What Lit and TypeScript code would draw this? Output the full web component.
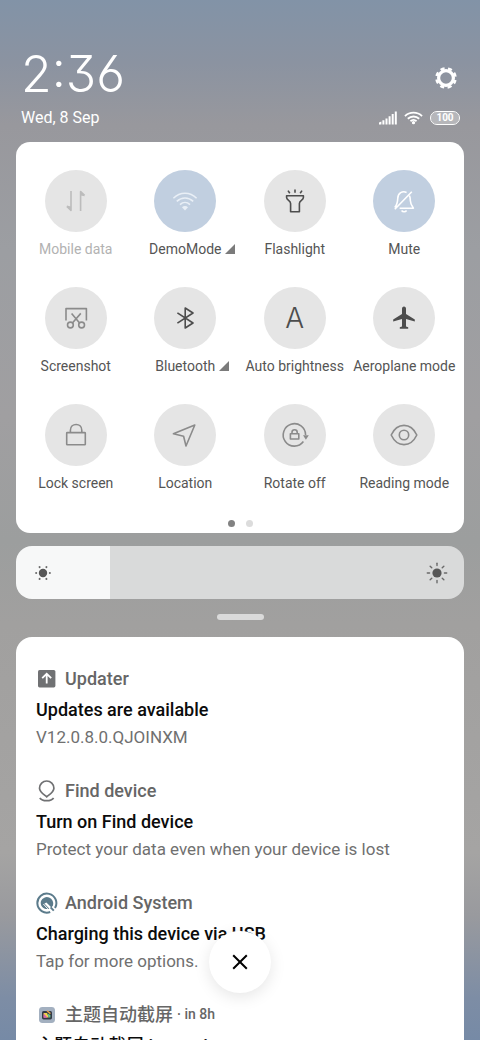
import { LitElement, html, css, svg, nothing } from "lit";
import { customElement, property, state } from "lit/decorators.js";
import { classMap } from "lit/directives/class-map.js";
import { styleMap } from "lit/directives/style-map.js";

const tileIcons: Record<string, unknown> = {
  data: svg`<path d="M9 4V23.4L4.8 19.4M18.6 24V4.6L22.6 8.4" /><path class="fill" d="M4.8 18.4L9 19.6V24ZM18.6 3.8L22.8 9.2L18.6 8.4Z" />`,
  wifi: svg`<path d="M2.4 11.2C9 4.6 19 4.6 25.6 11.2M5.8 14.4C10.6 9.8 17.4 9.8 22.2 14.4M9 17.6C12 14.8 16 14.8 19 17.6" /><path class="fill" d="M14 23.4L11 20.2C12.6 18.6 15.4 18.6 17 20.2Z" />`,
  flash: svg`<path d="M14 2.6V5.8M7 3.6L8.8 6.2M21 3.6L19.2 6.2M5.6 8.8H22.4V10.4C22.4 13.2 18.4 13.4 18.4 16.4V24.8H9.6V16.4C9.6 13.4 5.6 13.2 5.6 10.4Z" />`,
  mute: svg`<path d="M19.4 8.6C20.3 10 20.2 11.6 20.3 13.4C20.4 16.6 21.4 18.4 23.4 21.2H9.6M16.6 5.4C12.4 3.6 8 6 7.8 11C7.6 15.4 7.2 17.6 4.8 20.6M21.8 4.8L4.8 22.2M11.6 23.6C12.8 25.2 15.4 25.2 16.6 23.6" />`,
  shot: svg`<path d="M4 16.4V4.6H24.4V16.4M9.6 9.4L17.6 19M18.8 9.4L10.4 19" /><circle cx="8.4" cy="21" r="2.9" /><circle cx="19.6" cy="21" r="2.9" />`,
  bluetooth: svg`<path d="M6.4 8.8L22 19L14.2 24V4L22 9L6.4 19.2" />`,
  plane: svg`<path class="fill" d="M14 2.6C15.2 2.6 16 3.6 16 4.8V10L24.8 15.6V17.6L16 15V22.4L18.2 23.2V24.8H9.8V23.2L12 22.4V15L3.2 17.6V15.6L12 10V4.8C12 3.6 12.8 2.6 14 2.6Z" />`,
  lock: svg`<rect x="4.7" y="11.6" width="18.6" height="12.2" rx="0.6" /><path d="M8.4 11.4V9.2C8.4 1.6 19.8 1.6 19.8 9.2V11.4" />`,
  location: svg`<path d="M2.4 12.8L23.8 4L15 25L12.6 15.2Z" />`,
  rotate: svg`<path d="M22.4 20.6A11.2 11.2 0 1 1 24.6 14" /><path class="fill" d="M22 14.2H27.8L24.9 18.8Z" /><rect x="9.4" y="12.8" width="8.4" height="5.2" /><path d="M11 12.6V11.2C11 7.9 16.2 7.9 16.2 11.2V12.6" />`,
  eye: svg`<path d="M1.2 14C7.2 1.2 20.8 1.2 26.8 14C20.8 26.8 7.2 26.8 1.2 14Z" /><circle cx="14" cy="14" r="4.7" />`,
};

interface Tile {
  icon: string;
  label: string;
  tone?: "faint" | "strong" | "white" | "pale";
  on?: boolean;
  more?: boolean;
}

const tiles: Tile[] = [
  { icon: "data", label: "Mobile data", tone: "faint" },
  { icon: "wifi", label: "DemoMode", tone: "pale", on: true, more: true },
  { icon: "flash", label: "Flashlight", tone: "strong" },
  { icon: "mute", label: "Mute", tone: "white", on: true },
  { icon: "shot", label: "Screenshot" },
  { icon: "bluetooth", label: "Bluetooth", tone: "strong", more: true },
  { icon: "auto", label: "Auto brightness", tone: "strong" },
  { icon: "plane", label: "Aeroplane mode", tone: "strong" },
  { icon: "lock", label: "Lock screen" },
  { icon: "location", label: "Location" },
  { icon: "rotate", label: "Rotate off" },
  { icon: "eye", label: "Reading mode" },
];

@customElement("quick-tile")
class QuickTile extends LitElement {
  @property({ attribute: false }) tile!: Tile;

  static styles = css`
    :host { display: block; min-width: 0; }
    .tile {
      display: flex; flex-direction: column; align-items: center; gap: 8px;
      width: 100%; padding: 0; border: 0; background: none; cursor: pointer;
      font: 400 14px/18px Roboto, sans-serif; color: #555;
    }
    .disc {
      display: grid; place-items: center; width: 62px; height: 62px;
      border-radius: 50%; background: #e5e5e5; color: #8b8b8b;
    }
    .disc.on { background: #c1cfe0; }
    .disc.faint { color: #bcbcbc; }
    .disc.strong { color: #4d4d4d; }
    .disc.white { color: #fff; }
    .disc.pale { color: #e9eff6; }
    .icon { width: 28px; height: 28px; fill: none; stroke: currentColor; stroke-width: 1.6; stroke-linejoin: round; overflow: visible; }
    .fill { fill: currentColor; stroke: none; }
    .letter { font: 300 28px/28px Inter, sans-serif; }
    .label { white-space: nowrap; }
    .label.faint { color: #b2b2b2; }
    .more { width: 10px; height: 10px; margin: 0 -14px 0 4px; fill: #7b7b7b; }
  `;

  render() {
    const t = this.tile;
    const tone = t.tone ?? "";
    return html`<button class="tile" aria-pressed=${t.on ? "true" : "false"}>
      <span class=${classMap({ disc: true, on: !!t.on, [tone || "plain"]: true })}>
        ${t.icon === "auto"
          ? html`<span class="letter" aria-hidden="true">A</span>`
          : html`<svg class="icon" viewBox="0 0 28 28" aria-hidden="true">${tileIcons[t.icon]}</svg>`}
      </span>
      <span class=${classMap({ label: true, faint: tone === "faint" })}>${t.label}${t.more
        ? html`<svg class="more" viewBox="0 0 10 10" aria-hidden="true"><path d="M10 0V10H0Z" /></svg>`
        : nothing}</span>
    </button>`;
  }
}

const noteIcons: Record<string, unknown> = {
  updater: svg`<rect x="2" y="2" width="17.4" height="17.4" rx="1.6" fill="#707173" /><path d="M10.7 15.6V6.2M6.2 10.2L10.7 5.8L15.2 10.2" fill="none" stroke="#fff" stroke-width="1.8" />`,
  find: svg`<path d="M10.7 16.8C7.3 14 3.5 11.8 3.5 8.2A7.2 7.2 0 0 1 17.9 8.2C17.9 11.8 14.1 14 10.7 16.8Z" fill="none" stroke="#707173" stroke-width="1.7" /><path d="M3.8 18C6.2 21.6 15.2 21.6 17.6 18" fill="none" stroke="#707173" stroke-width="1.7" />`,
  android: svg`<path d="M14.2 20A9.5 9.5 0 1 1 19 16" fill="none" stroke="#5b7b8b" stroke-width="2" /><path d="M12 17A6.2 6.2 0 0 1 5 9A6.4 6.4 0 0 1 17 13.4L15.4 15.4L10.4 10.6L8.4 11.4L13.4 16.8Z" fill="#5b7b8b" /><path d="M7.4 12L11.8 16.8" stroke="#fff" stroke-width="1" /><path d="M14.6 15.4L17.8 18.6" stroke="#5b7b8b" stroke-width="2" />`,
  theme: svg`<rect x="3" y="3" width="16" height="16" rx="3.4" fill="#a3b0c0" /><rect x="6" y="7" width="10" height="8.4" rx="1.6" fill="#333a45" /><path d="M7.6 9H11L12.8 13.6H7.6Z" fill="#f3d34a" /><path d="M7.6 9.6L11.6 13.8H7.6Z" fill="#d65fb6" /><path d="M11.4 9.6L14.4 11V13.6H12.8Z" fill="#64c98c" /><path d="M11 6.8L14.4 9.6" stroke="#e9a04a" stroke-width="1.4" />`,
};

interface Note {
  icon: string;
  app: string;
  when?: string;
  title: string;
  body: string;
}

const notes: Note[] = [
  { icon: "updater", app: "Updater", title: "Updates are available", body: "V12.0.8.0.QJOINXM" },
  { icon: "find", app: "Find device", title: "Turn on Find device", body: "Protect your data even when your device is lost" },
  { icon: "android", app: "Android System", title: "Charging this device via USB", body: "Tap for more options." },
  { icon: "theme", app: "主题自动截屏", when: "in 8h", title: "主题自动截屏 is running", body: "" },
];

@customElement("app-root")
class AppRoot extends LitElement {
  @state() private level = 21;

  static styles = css`
    :host {
      display: block; position: relative; height: 100vh; overflow: hidden; box-sizing: border-box;
      font-family: Roboto, "Noto Sans CJK SC", sans-serif;
      background: linear-gradient(180deg, #8293a7 0%, #8b93a1 6%, #98989d 12%, #9c9ea2 24%, #a09fa1 40%, #9c9e9e 52%, #a1a09f 60%, #a5a4a3 82%, #999a9e 88%, #7d8da5 96%, #768aa6 100%);
    }
    .panel { padding: 46px 16px 0; }
    .head { display: flex; justify-content: space-between; padding: 0 4px 0 5px; color: #fff; height: 96px; box-sizing: border-box; }
    .left, .right { display: flex; flex-direction: column; }
    .right { align-items: flex-end; padding-top: 20px; gap: 20px; }
    .clock { font: 300 50px/56px Inter, sans-serif; font-feature-settings: "cv09", "cv03"; }
    .date { margin-top: 6px; font-size: 16px; line-height: 20px; }
    .gear { display: block; padding: 0; margin-right: 2px; border: 0; background: none; width: 24px; height: 24px; cursor: pointer; }
    .svg { display: block; }
    .status { display: flex; align-items: center; gap: 7px; height: 15px; }
    .battery {
      box-sizing: border-box; width: 30px; height: 14px; padding: 0; border: 1px solid #fff; border-radius: 7px;
      background: rgba(255, 255, 255, 0.3); background-clip: padding-box;
      font-size: 10px; line-height: 12px; font-weight: 700; text-align: center;
    }
    .card { background: #fff; border-radius: 14px; }
    .tiles { padding: 28px 5px 5px; }
    .grid { display: grid; grid-template-columns: repeat(4, minmax(0, 1fr)); row-gap: 29px; }
    .dots { display: flex; justify-content: center; gap: 11px; margin-top: 28px; height: 8px; }
    .dot { width: 7px; height: 7px; padding: 0; border: 0; border-radius: 50%; background: #dcdcdc; }
    .dot.now { background: #828282; }
    .bright { display: grid; margin-top: 13px; height: 53px; border-radius: 16px; overflow: hidden; }
    .range {
      grid-area: 1 / 1; appearance: none; -webkit-appearance: none; width: 100%; height: 53px; margin: 0; cursor: pointer;
      background: linear-gradient(90deg, #f7f8f8 var(--level), #d9dada var(--level));
    }
    .range::-webkit-slider-thumb { -webkit-appearance: none; width: 1px; height: 53px; background: transparent; }
    .suns { grid-area: 1 / 1; display: flex; align-items: center; justify-content: space-between; padding: 0 16px; pointer-events: none; }
    .sun { fill: #575757; stroke: #6a6a6a; stroke-width: 1.4; stroke-linecap: round; }
    .sun.low { stroke-width: 2; }
    .disk { stroke: none; }
    .handle { width: 47px; height: 6px; margin: 15px auto 17px; border-radius: 3px; background: #dadada; }
    .notes { margin: 0; padding: 30px 20px; list-style: none; display: flex; flex-direction: column; gap: 30px; border-radius: 16px; }
    .note { display: block; min-height: 82px; }
    .app { display: flex; align-items: center; gap: 8px; height: 23px; font-size: 18px; font-weight: 500; line-height: 23px; color: #666; }
    .mark { flex: none; width: 22px; height: 22px; margin-right: -1px; }
    .when { margin-left: -4px; font-size: 14px; }
    .title { margin: 8px 0 0; font-size: 18px; font-weight: 500; line-height: 24px; color: #0c0c0c; }
    .body { margin: 3px 0 0; font-size: 17px; line-height: 24px; color: #707070; }
    .close {
      position: absolute; left: 50%; bottom: 47px; margin-left: -31px; width: 62px; height: 62px; padding: 0;
      display: grid; place-items: center; border: 0; border-radius: 50%; background: #fff; cursor: pointer;
      box-shadow: 0 4px 16px rgba(0, 0, 0, 0.1);
    }
  `;

  private onLevel(e: Event) {
    this.level = Number((e.target as HTMLInputElement).value);
  }

  private rays(n: number, from: number, to: number) {
    return Array.from({ length: n }, (_, i) => svg`<path d="M11 ${11 - from}V${11 - to}" transform="rotate(${(360 / n) * i + (n === 6 ? 30 : 0)} 11 11)" />`);
  }

  render() {
    return html`<main class="panel">
      <header class="head">
        <div class="left">
          <time class="clock">2:36</time>
          <span class="date">Wed, 8 Sep</span>
        </div>
        <div class="right">
          <button class="gear" aria-label="Settings">
            <svg class="svg" width="24" height="24" viewBox="0 0 24 24" fill="none" stroke="#fff">
              <circle cx="12" cy="12" r="7.4" stroke-width="3.2" />
              <circle cx="12" cy="12" r="9.6" stroke-width="2.4" stroke-dasharray="4.2 3.34" stroke-dashoffset="2.1" transform="rotate(22.5 12 12)" />
            </svg>
          </button>
          <div class="status">
            <svg class="svg" width="18" height="14" viewBox="0 0 18 14" fill="#fff" role="img" aria-label="Signal">
              <path d="M0 11.4L2.4 10.6V13.4H0ZM3.4 9.2H5.4V13.4H3.4ZM6.5 7.4H8.5V13.4H6.5ZM9.6 5.2H11.6V13.4H9.6ZM12.7 3H14.7V13.4H12.7ZM15.8 0.6H17.8V13.4H15.8Z" />
            </svg>
            <svg class="svg" width="19" height="14" viewBox="0 0 20 14" fill="none" stroke="#fff" stroke-width="1.9" role="img" aria-label="Wi-Fi">
              <path d="M1 5C6 0.2 14 0.2 19 5M4 7.8C7.4 4.6 12.6 4.6 16 7.8M6.8 10.4C8.8 8.6 11.2 8.6 13.2 10.4" />
              <circle cx="10" cy="11.9" r="1.7" fill="#fff" stroke="none" />
            </svg>
            <span class="battery">100</span>
          </div>
        </div>
      </header>

      <section class="card tiles" aria-label="Quick settings">
        <div class="grid">${tiles.map((t) => html`<quick-tile .tile=${t}></quick-tile>`)}</div>
        <div class="dots">
          <button class="dot now" aria-label="Page 1"></button>
          <button class="dot" aria-label="Page 2"></button>
        </div>
      </section>

      <div class="bright">
        <input class="range" type="range" min="0" max="100" aria-label="Brightness" .value=${String(this.level)}
          style=${styleMap({ "--level": `${this.level}%` })} @input=${this.onLevel} />
        <div class="suns" aria-hidden="true">
          <svg class="svg sun low" width="22" height="22" viewBox="0 0 22 22"><circle class="disk" cx="11" cy="11" r="4.2" />${this.rays(6, 6.8, 6.9)}</svg>
          <svg class="svg sun" width="22" height="22" viewBox="0 0 22 22"><circle class="disk" cx="11" cy="11" r="4.6" />${this.rays(8, 7.4, 9.7)}</svg>
        </div>
      </div>

      <div class="handle"></div>

      <ul class="card notes">
        ${notes.map((n) => html`<li class="note">
          <div class="app">
            <svg class="mark" viewBox="0 0 22 22" aria-hidden="true">${noteIcons[n.icon]}</svg>
            <span>${n.app}</span>${n.when ? html`<span class="when">· ${n.when}</span>` : nothing}
          </div>
          <h2 class="title">${n.title}</h2>
          ${n.body ? html`<p class="body">${n.body}</p>` : nothing}
        </li>`)}
      </ul>
    </main>
    <button class="close" aria-label="Clear all">
      <svg class="svg" width="16" height="16" viewBox="0 0 16 16" fill="none" stroke="#000" stroke-width="2"><path d="M1.2 1.2L14.8 14.8M14.8 1.2L1.2 14.8" /></svg>
    </button>`;
  }
}
